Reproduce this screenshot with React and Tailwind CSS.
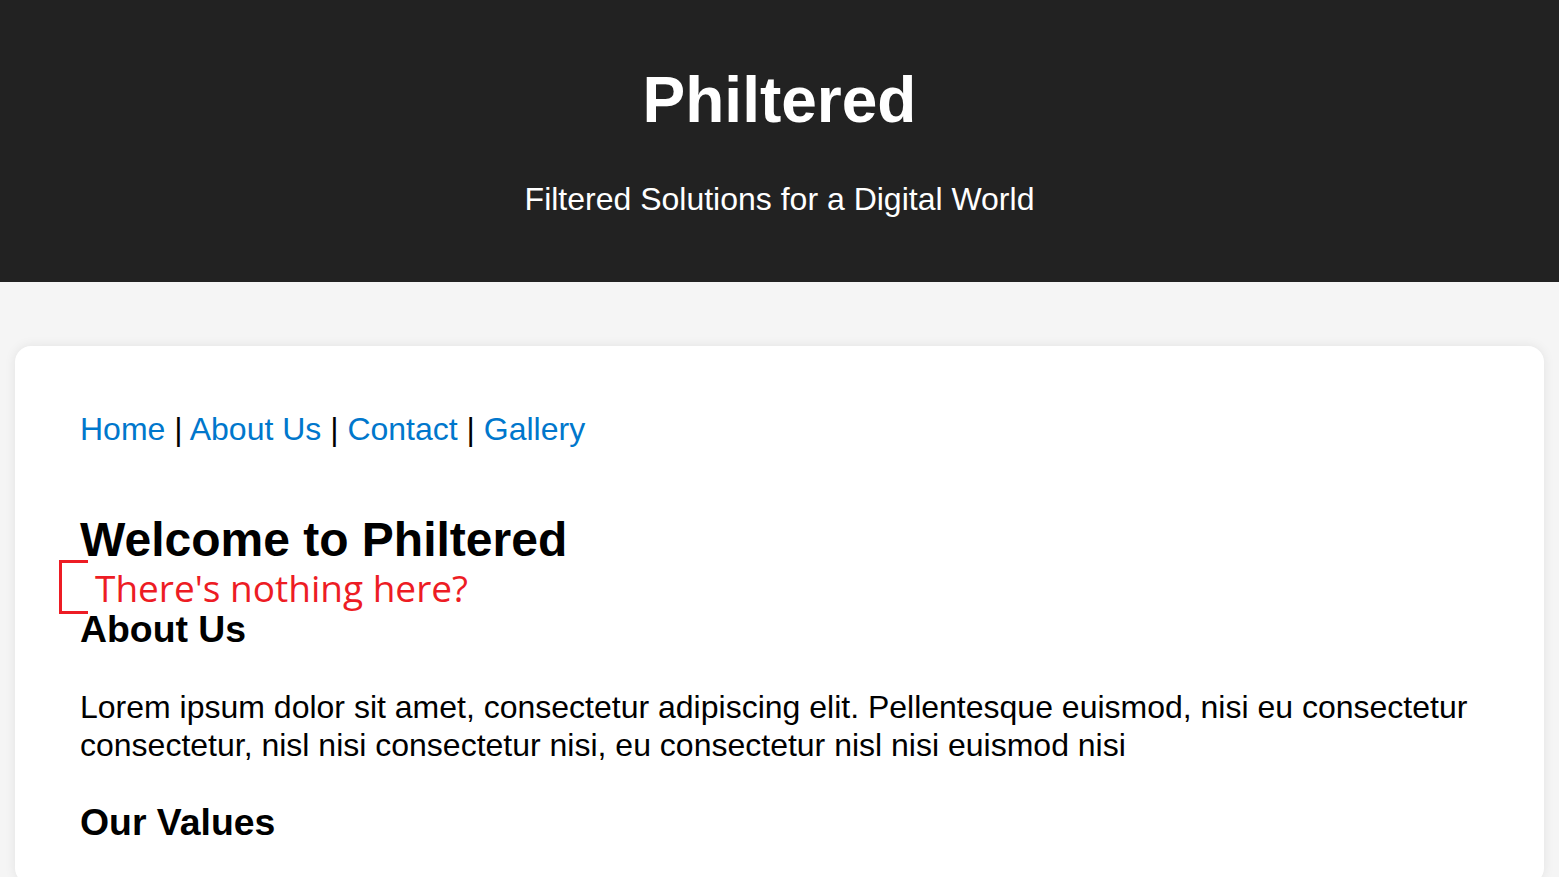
import React from 'react';

const links = ['Home', 'About Us', 'Contact', 'Gallery'];

export default function App() {
  return (
    <div className="min-h-screen bg-[#f5f5f5] font-['Liberation_Sans',Arial,sans-serif] text-[32px] leading-[1.15] text-black">
      <header className="bg-[#222222] pt-[64px] pb-[65px] text-center text-white">
        <h1 className="text-[64px] font-bold leading-[1.15]">Philtered</h1>
        <p className="mt-[43px]">Filtered Solutions for a Digital World</p>
      </header>

      <main className="px-[15px] pt-[64px]">
        <div className="relative rounded-2xl bg-white px-[65px] pt-[65px] pb-[40px] shadow-[0_0_12px_rgba(0,0,0,0.08)]">
          <nav>
            {links.map((l, i) => (
              <React.Fragment key={l}>
                {i > 0 && <span> | </span>}
                <a href="#" className="text-[#0077cc]">{l}</a>
              </React.Fragment>
            ))}
          </nav>

          <h1 className="mt-[64px] text-[48px] font-bold leading-[1.15]">Welcome to Philtered</h1>

          {/* annotation overlay */}
          <div className="absolute left-[44px] top-[214px] h-[54px] w-[29px] border-[3px] border-r-0 border-[#ed1c24]" />
          <div className="absolute left-[80px] top-[220px] font-['Open_Sans',sans-serif] text-[37px] leading-[1.2] text-[#ed1c24]">
            There's nothing here?
          </div>

          <h2 className="mt-[41px] text-[37.4px] font-bold leading-[1.15]">About Us</h2>
          <p className="mt-[37px] leading-[38px]">
            Lorem ipsum dolor sit amet, consectetur adipiscing elit. Pellentesque euismod, nisi eu consectetur consectetur, nisl nisi consectetur nisi, eu consectetur nisl nisi euismod nisi
          </p>
          <h2 className="mt-[37px] text-[37.4px] font-bold leading-[1.15]">Our Values</h2>
        </div>
      </main>
    </div>
  );
}
